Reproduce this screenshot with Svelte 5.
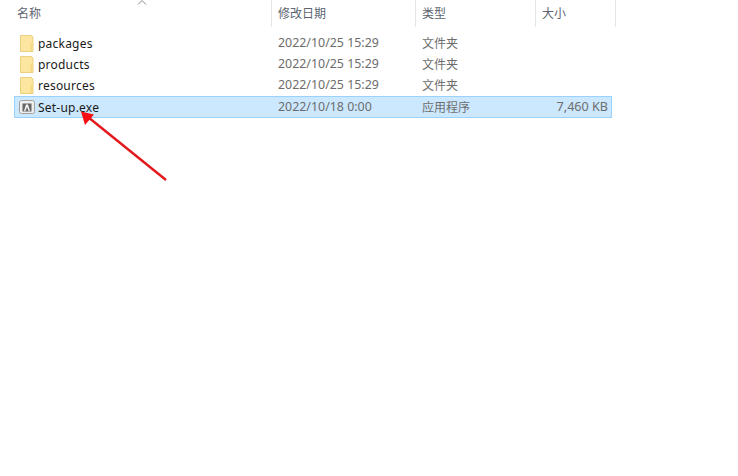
<script lang="ts">
  const columns = [
    { label: '名称', cls: 'name' },
    { label: '修改日期', cls: 'date' },
    { label: '类型', cls: 'type' },
    { label: '大小', cls: 'size' }
  ];

  const files = [
    { name: 'packages', date: '2022/10/25 15:29', type: '文件夹', size: '', folder: true },
    { name: 'products', date: '2022/10/25 15:29', type: '文件夹', size: '', folder: true },
    { name: 'resources', date: '2022/10/25 15:29', type: '文件夹', size: '', folder: true },
    { name: 'Set-up.exe', date: '2022/10/18 0:00', type: '应用程序', size: '7,460 KB', folder: false }
  ];
</script>

<div class="explorer">
  <svg class="sort" width="10" height="5" viewBox="0 0 10 5" aria-hidden="true">
    <path d="M1 4.5 L5 0.5 L9 4.5" fill="none" stroke="#8a8a8a" stroke-width="1" />
  </svg>

  <header class="head">
    {#each columns as col}
      <div class="head__cell head__cell--{col.cls}">{col.label}</div>
    {/each}
  </header>

  <ul class="list">
    {#each files as file}
      <li class="row" class:row--selected={!file.folder}>
        <span class="row__name">
          {#if file.folder}
            <svg class="icon" width="16" height="18" viewBox="0 0 16 18" aria-hidden="true">
              <path d="M1.5 0.5 H12 L14 2 V16.5 H1.5 Z" fill="#fde7a0" stroke="#ecd07e" />
              <path d="M11.5 8 H13.5 V16 H11.5 Z" fill="#f6d785" />
            </svg>
          {:else}
            <svg class="icon" width="16" height="14" viewBox="0 0 16 14" aria-hidden="true">
              <rect x="0.5" y="0.5" width="15" height="13" rx="2" fill="#eeeeee" stroke="#a2a2a2" />
              <rect x="3.5" y="3.5" width="9" height="8" fill="#666666" />
              <path d="M5 11 L7 4.5 H9 L11 11 H9.6 L8 7 L6.4 11 Z" fill="#f6f6f6" />
            </svg>
          {/if}
          <span class="row__text">{file.name}</span>
        </span>
        <span class="row__cell row__cell--date">{file.date}</span>
        <span class="row__cell row__cell--type">{file.type}</span>
        <span class="row__cell row__cell--size">{file.size}</span>
      </li>
    {/each}
  </ul>

  <svg class="arrow" width="110" height="90" viewBox="70 100 110 90" aria-hidden="true">
    <path d="M166 180 L88 117" stroke="#e2181c" stroke-width="2.4" fill="none" />
    <path d="M81 111.5 L94 114.5 L85 125 Z" fill="#f80d14" />
  </svg>
</div>

<style>
  :global(body) {
    margin: 0;
    background: #fff;
  }

  .explorer {
    position: relative;
    width: 738px;
    height: 476px;
    overflow: hidden;
    background: #fff;
    font-family: 'Noto Sans', 'Noto Sans CJK SC', sans-serif;
    font-size: 12px;
  }

  .sort {
    position: absolute;
    left: 137px;
    top: 0;
  }

  .head {
    display: grid;
    grid-template-columns: 272px 144px 120px 80px;
    height: 27px;
    color: #5b6470;
    font-family: 'Noto Sans CJK SC', sans-serif;
    font-size: 12px;
  }

  .head__cell {
    display: flex;
    align-items: center;
    height: 27px;
    padding-left: 6px;
    padding-bottom: 2px;
    box-sizing: border-box;
    border-right: 1px solid #e5e5e5;
  }

  .head__cell--name {
    padding-left: 17px;
  }

  .list {
    list-style: none;
    margin: 6px 0 0;
    padding: 0;
  }

  .row {
    display: grid;
    grid-template-columns: 257px 144px 120px 75px;
    align-items: center;
    box-sizing: border-box;
    width: 598px;
    height: 21px;
    margin-left: 14px;
    border: 1px solid transparent;
  }

  .row--selected {
    height: 22px;
    background: #cce8ff;
    border-color: #99d1ff;
  }

  .row__name {
    display: flex;
    align-items: center;
    color: #1a1a1a;
    font-size: 12px;
  }

  .icon {
    margin-left: 4px;
    flex: none;
  }

  .row__text {
    margin-left: 3px;
    letter-spacing: 0.22px;
  }

  .row__cell {
    color: #6d6d6d;
    padding-left: 6px;
    line-height: 17px;
    padding-bottom: 2px;
    font-size: 12.4px;
  }

  .row__cell--type {
    font-family: 'Noto Sans CJK SC', sans-serif;
    font-size: 12px;
  }

  .row__cell--size {
    padding: 0 3px 2px 0;
    text-align: right;
    font-size: 12.6px;
  }

  .arrow {
    position: absolute;
    left: 70px;
    top: 100px;
  }
</style>
